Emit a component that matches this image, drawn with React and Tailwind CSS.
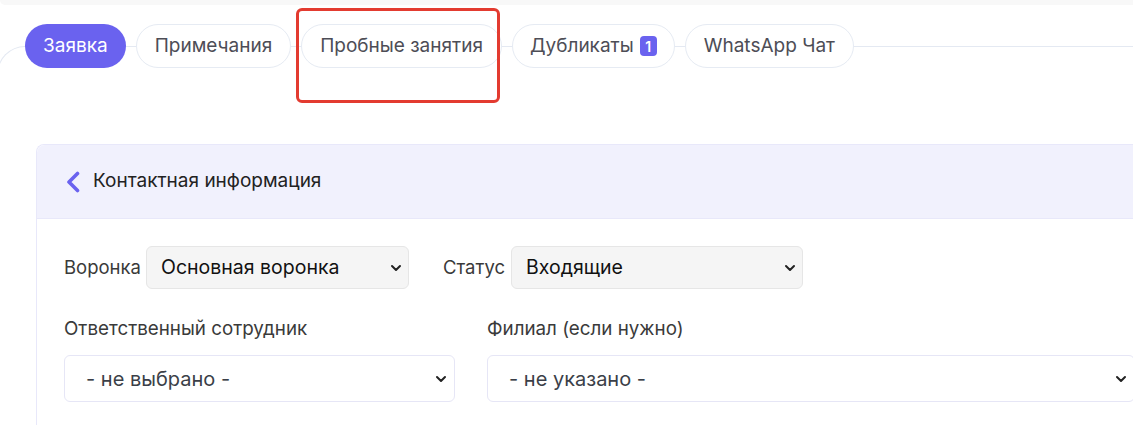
import { ChevronDown } from 'lucide-react'

const tabs = [
  { label: 'Заявка', active: true },
  { label: 'Примечания' },
  { label: 'Пробные занятия' },
  { label: 'Дубликаты', badge: '1' },
  { label: 'WhatsApp Чат' },
]

function Select({ value, className = '', filled = false }) {
  return (
    <div
      className={`flex items-center justify-between rounded-md border ${
        filled
          ? 'bg-[#f5f5f5] border-[#e6e6e6] pl-[14px] pr-[4px] text-[#111] text-[19.5px]'
          : 'bg-white border-[#e6e6f6] pl-[21px] pr-[5px] text-[#3b3f48] text-[20px]'
      } ${className}`}
    >
      <span>{value}</span>
      <ChevronDown className="h-[16px] w-[16px] text-[#222]" strokeWidth={3} />
    </div>
  )
}

export default function App() {
  return (
    <div className="min-h-screen bg-white font-['Inter',sans-serif] overflow-hidden">
      {/* top strip */}
      <div className="h-[5px] bg-[#f8f8f8] rounded-bl-lg" />

      {/* Tabs */}
      <div className="relative pt-[19px] pl-[25px]">
        <div className="absolute left-[-3px] top-[41px] right-0 h-[80px] border-t border-l border-[#e4e9f2] rounded-tl-[28px]" />
        <div className="relative flex items-center gap-[10px]">
          {tabs.map((t) => (
            <div
              key={t.label}
              className={`h-[44px] flex items-center gap-[6px] rounded-full text-[19px] ${
                t.badge ? 'px-[17px]' : 'px-[18px]'
              } ${
                t.active
                  ? 'bg-[#6a62ef] text-white'
                  : 'bg-white border border-[#e6ebf3] text-[#4d4d56]'
              }`}
            >
              {t.label}
              {t.badge && (
                <span className="h-[20px] min-w-[17px] px-[4px] rounded bg-[#6a62ef] text-white text-[14px] font-semibold flex items-center justify-center">
                  {t.badge}
                </span>
              )}
            </div>
          ))}
        </div>
        {/* highlight annotation */}
        <div className="absolute left-[296px] top-[3px] w-[204px] h-[95px] border-[3px] border-[#e33b30] rounded-md" />
      </div>

      {/* Card */}
      <div className="ml-[36px] mt-[76px] border-l border-t border-[#e8e8fa] rounded-tl-lg min-h-[300px]">
        <div className="h-[74px] bg-[#f1f1fd] border-b border-[#e8e8fa] rounded-tl-lg flex items-center pl-[28px] gap-[12px]">
          <svg width="16" height="22" viewBox="0 0 16 22" fill="none">
            <path d="M12.5 2.5 L4 11 L12.5 19.5" stroke="#6a62ef" strokeWidth="3.6" strokeLinecap="round" strokeLinejoin="round" />
          </svg>
          <span className="text-[19px] text-[#222]">Контактная информация</span>
        </div>

        <div className="pl-[27px] pt-[27px]">
          <div className="flex items-center">
            <span className="text-[18.5px] text-[#3a3a3a] mr-[5px]">Воронка</span>
            <Select filled value="Основная воронка" className="w-[263px] h-[43px]" />
            <span className="text-[18.5px] text-[#3a3a3a] ml-[34px] mr-[6px]">Статус</span>
            <Select filled value="Входящие" className="w-[292px] h-[43px]" />
          </div>

          <div className="flex gap-[32px] mt-[28px]">
            <div className="w-[391px] shrink-0">
              <div className="text-[18.8px] text-[#3a3a3a] h-[24px] leading-[24px]">Ответственный сотрудник</div>
              <Select value="- не выбрано -" className="mt-[14px] h-[47px]" />
            </div>
            <div className="w-[648px] shrink-0">
              <div className="text-[18.8px] text-[#3a3a3a] h-[24px] leading-[24px]">Филиал (если нужно)</div>
              <Select value="- не указано -" className="mt-[14px] h-[47px]" />
            </div>
          </div>
        </div>
      </div>
    </div>
  )
}
